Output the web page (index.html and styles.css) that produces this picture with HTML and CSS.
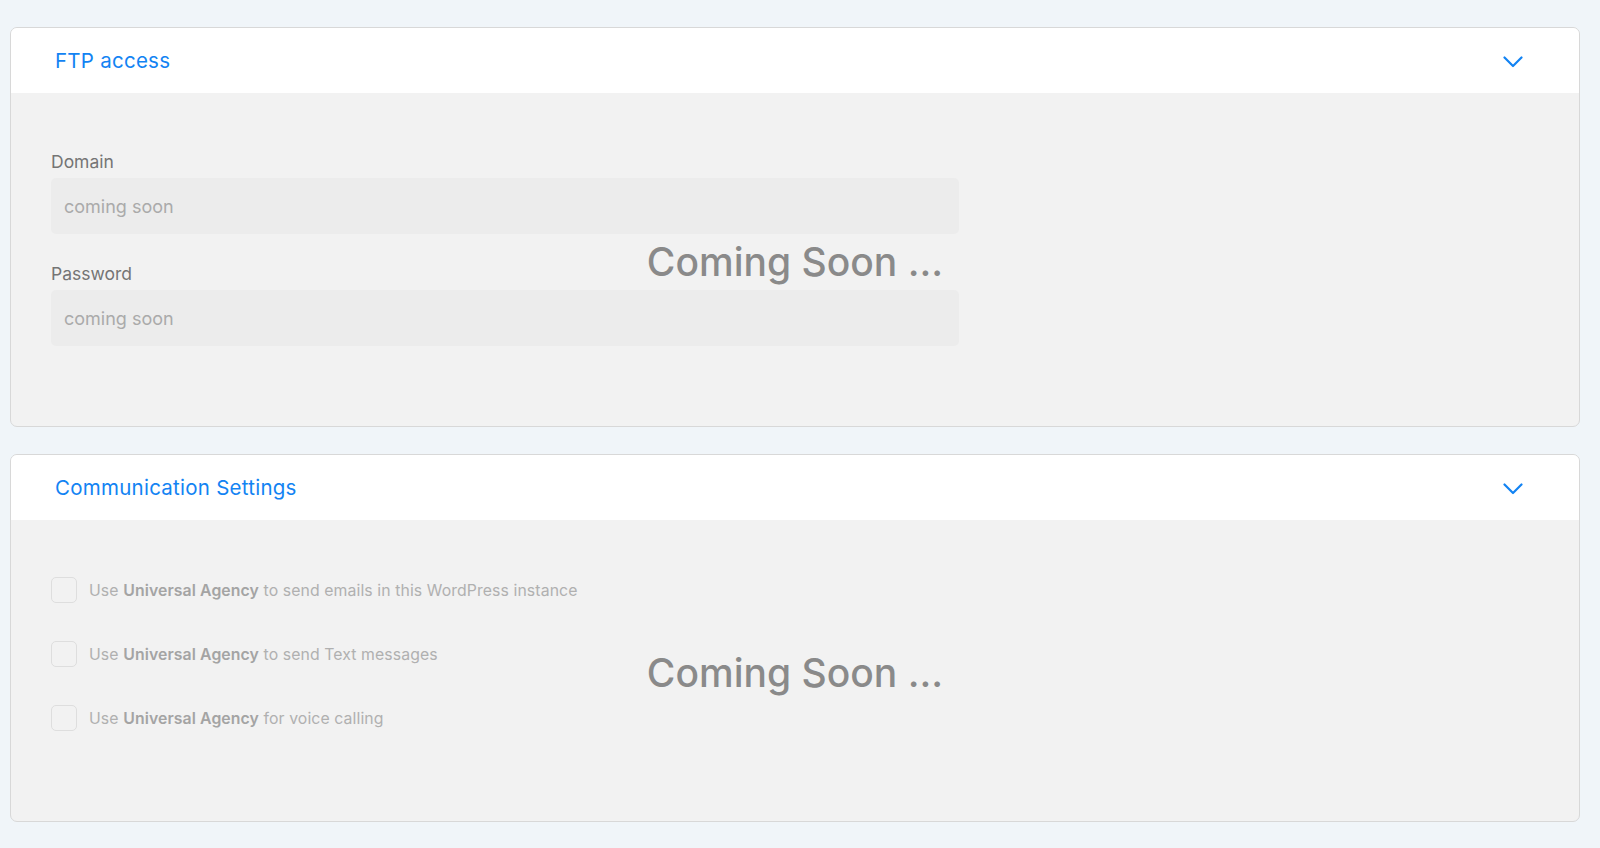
FILE: index.html
```html
<!DOCTYPE html>
<html lang="en">
<head>
    <meta charset="UTF-8">
    <meta name="viewport" content="width=device-width, initial-scale=1.0">
    <title>Settings</title>
    <link rel="stylesheet" href="styles.css">
</head>
<body>

    <section class="card">
        <div class="card-header">
            <h2>FTP access</h2>
            <svg class="chevron" width="20" height="12" viewBox="0 0 20 12"><path d="M1.5 1.5 L10 10 L18.5 1.5" fill="none" stroke="currentColor" stroke-width="2.2" stroke-linecap="round" stroke-linejoin="round"/></svg>
        </div>
        <div class="card-body ftp-body">
            <div class="fields">
                <div class="field">
                    <label>Domain</label>
                    <input type="text" placeholder="coming soon" disabled>
                </div>
                <div class="field">
                    <label>Password</label>
                    <input type="password" placeholder="coming soon" disabled>
                </div>
            </div>
            <div class="soon">Coming Soon ...</div>
        </div>
    </section>

    <section class="card">
        <div class="card-header">
            <h2>Communication Settings</h2>
            <svg class="chevron" width="20" height="12" viewBox="0 0 20 12"><path d="M1.5 1.5 L10 10 L18.5 1.5" fill="none" stroke="currentColor" stroke-width="2.2" stroke-linecap="round" stroke-linejoin="round"/></svg>
        </div>
        <div class="card-body comm-body">
            <label class="check-row"><span class="box"></span>Use&nbsp;<b>Universal Agency</b>&nbsp;to send emails in this WordPress instance</label>
            <label class="check-row"><span class="box"></span>Use&nbsp;<b>Universal Agency</b>&nbsp;to send Text messages</label>
            <label class="check-row"><span class="box"></span>Use&nbsp;<b>Universal Agency</b>&nbsp;for voice calling</label>
            <div class="soon">Coming Soon ...</div>
        </div>
    </section>

</body>
</html>
```

FILE: styles.css
```css
:root {
    --page-bg: #f0f5f9;
    --card-border: #d8d8d8;
    --body-bg: #f2f2f2;
    --input-bg: #ececec;
    --blue: #1283f3;
}
body {
    font-family: Inter, "Noto Sans", "Liberation Sans", sans-serif;
    background-color: var(--page-bg);
    margin: 0;
    padding: 27px 20px 20px 10px;
    display: flex;
    flex-direction: column;
    gap: 27px;
}
.card {
    border: 1.5px solid var(--card-border);
    border-radius: 7px;
    overflow: hidden;
    background-color: var(--body-bg);
}
.card-header {
    background-color: #fff;
    height: 65px;
    display: flex;
    align-items: center;
    justify-content: space-between;
    padding: 0 56px 0 44px;
}
.card-header h2 {
    margin: 0;
    font-size: 20.5px;
    font-weight: 400;
    letter-spacing: 0.25px;
    color: var(--blue);
}
.chevron {
    color: var(--blue);
    margin-top: 2px;
}
.card-body {
    position: relative;
}
.ftp-body {
    padding: 59px 40px 80px 40px;
}
.fields {
    width: 908px;
    display: flex;
    flex-direction: column;
    gap: 30px;
}
.field label {
    display: block;
    font-size: 17.5px;
    line-height: 20px;
    color: #757575;
    margin-bottom: 6px;
}
.field input {
    display: block;
    box-sizing: border-box;
    width: 100%;
    height: 56px;
    border: none;
    border-radius: 5px;
    background-color: var(--input-bg);
    padding: 0 13px;
    font-family: inherit;
    font-size: 18px;
}
.field input::placeholder {
    color: #aaa;
}
.comm-body {
    padding: 57px 40px 90px 40px;
    display: flex;
    flex-direction: column;
    gap: 38px;
}
.check-row {
    display: flex;
    align-items: center;
    font-size: 15.8px;
    color: #b0b0b0;
    letter-spacing: 0.1px;
}
.check-row b {
    font-weight: 600;
    color: #a4a4a4;
}
.box {
    width: 24px;
    height: 24px;
    border: 1px solid #dedede;
    border-radius: 5px;
    margin-right: 12px;
    flex-shrink: 0;
}
.soon {
    position: absolute;
    inset: 0;
    padding-top: 4px;
    display: flex;
    align-items: center;
    justify-content: center;
    font-size: 39px;
    font-weight: 500;
    color: #8a8a8a;
    pointer-events: none;
}
```
